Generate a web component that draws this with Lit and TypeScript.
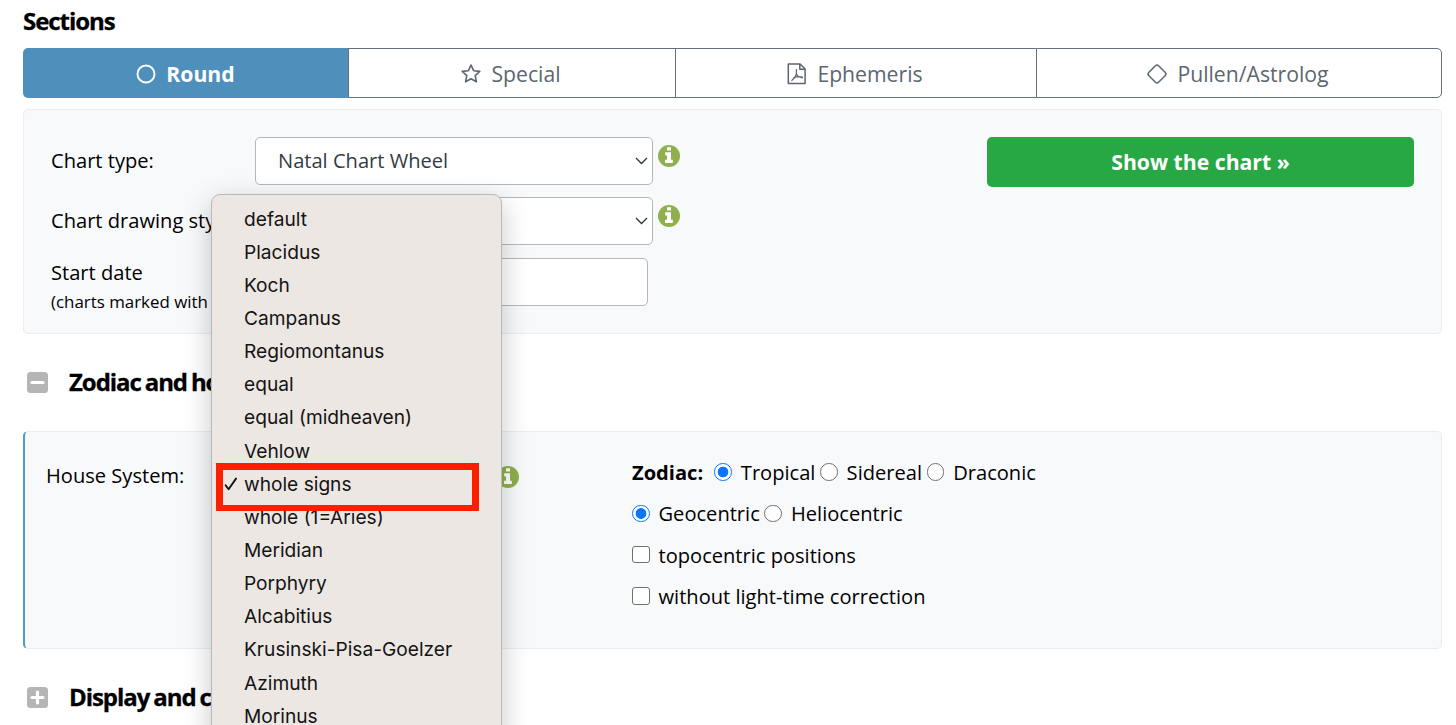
import { LitElement, html, css, svg } from 'lit';
import { customElement, property } from 'lit/decorators.js';

const HOUSE_SYSTEMS = [
  'default',
  'Placidus',
  'Koch',
  'Campanus',
  'Regiomontanus',
  'equal',
  'equal (midheaven)',
  'Vehlow',
  'whole signs',
  'whole (1=Aries)',
  'Meridian',
  'Porphyry',
  'Alcabitius',
  'Krusinski-Pisa-Goelzer',
  'Azimuth',
  'Morinus',
];

const TAB_ICONS = {
  round: svg`<circle cx="11" cy="11" r="8.5" stroke-width="1.9" />`,
  special: svg`<path d="M11 2l2.6 5.7 6.2.7-4.6 4.2 1.2 6.2-5.4-3.1-5.4 3.1 1.2-6.2-4.6-4.2 6.2-.7z" stroke-width="1.6" stroke-linejoin="round" />`,
  ephemeris: svg`
    <path d="M2.3 1h11.8l5 5v14.6H2.3zM13.8 1.2v5.1h5.2" stroke-width="1.5" stroke-linejoin="round" />
    <path d="M10.4 6.6v4.2c-.6 2.4-2.2 4.8-4.6 6.6M10.4 10.8c.8 2 2.8 3.6 6 4M7.8 14.6c2.4-1 5.4-1.3 8.6-.6" stroke-width="1.2" stroke-linecap="round" />
  `,
  pullen: svg`<rect x="4" y="4" width="14" height="14" rx="2.6" transform="rotate(45 11 11)" stroke-width="1.5" />`,
};

@customElement('info-icon')
export class InfoIcon extends LitElement {
  static styles = css`
    :host {
      display: block;
      width: 22px;
      height: 22px;
    }

    svg {
      display: block;
    }
  `;

  render() {
    return html`
      <svg width="22" height="22" viewBox="0 0 22 22">
        <circle cx="11" cy="11" r="11" fill="#8fb04c" />
        <path
          d="M9 2.3h4v3.2H9zM7.2 7.2h5.8v7.6h1.8v3.3H7v-3.3h2v-4.4H7.2z"
          fill="#fff"
        />
      </svg>
    `;
  }
}

@customElement('form-option')
export class FormOption extends LitElement {
  @property() type = 'radio';
  @property() name = '';
  @property({ type: Boolean }) checked = false;

  static styles = css`
    :host {
      display: block;
    }

    label {
      display: flex;
      align-items: center;
      gap: 9px;
      white-space: nowrap;
    }

    input {
      appearance: none;
      box-sizing: border-box;
      flex: none;
      width: 17.5px;
      height: 17.5px;
      margin: 0 0 2px;
      border: 1px solid #6f6f6f;
      border-radius: 3px;
      background: #fff;
    }

    input[type='radio'] {
      border-radius: 50%;
    }

    input[type='radio']:checked {
      border-color: #0a75ff;
      background: radial-gradient(circle, #0a75ff 5px, #fff 5.7px);
    }
  `;

  render() {
    return html`
      <label>
        <input type=${this.type} name=${this.name} .checked=${this.checked} />
        <slot></slot>
      </label>
    `;
  }
}

@customElement('app-root')
export class AppRoot extends LitElement {
  @property() selected = 'whole signs';

  static styles = css`
    :host {
      display: block;
      position: relative;
      box-sizing: border-box;
      height: 725px;
      overflow: hidden;
      padding: 0 14px 0 23px;
      background: #fff;
      color: #000;
      font-family: 'Open Sans', sans-serif;
      font-size: 20.1px;
      line-height: 30px;
    }

    * {
      box-sizing: border-box;
    }

    h2 {
      margin: 0;
      font-size: 24px;
      font-weight: 700;
      letter-spacing: -1.05px;
      word-spacing: -1.3px;
      white-space: nowrap;
      -webkit-text-stroke: 0.3px #000;
    }

    .title {
      padding-top: 6px;
      height: 48px;
    }

    .tabs {
      display: grid;
      grid-template-columns: 325px 327px 361px 1fr;
      height: 50px;
      color: #5c6670;
      font-size: 21.2px;
    }

    .tab {
      display: flex;
      align-items: center;
      justify-content: center;
      gap: 9px;
      padding: 1px 3px 0 0;
      border: 1px solid #66707a;
      border-right: none;
    }

    .tab:first-child {
      padding-right: 1px;
      border: none;
      border-radius: 5px 0 0 5px;
      background: #4e8fbc;
      color: #fff;
      font-weight: 700;
    }

    .tab:last-child {
      border-right: 1px solid #66707a;
      border-radius: 0 5px 5px 0;
    }

    .tab svg {
      fill: none;
      stroke: currentColor;
    }

    .panel {
      display: flex;
      border: 1px solid #ebecee;
      border-radius: 5px;
      background: #f8f9fb;
    }

    .chart-panel {
      justify-content: space-between;
      height: 225px;
      margin-top: 11px;
      padding: 27px 27px 0;
    }

    .fields {
      display: grid;
      grid-template-columns: 204px 398px 22px;
      grid-auto-rows: 48px;
      row-gap: 12.4px;
      column-gap: 0;
      white-space: nowrap;
    }

    .label {
      padding-top: 9px;
    }

    .label.double {
      padding-top: 0;
    }

    .label small {
      display: block;
      font-size: 16.9px;
      line-height: 28px;
    }

    .select,
    .input {
      border: 1px solid #b6b7b9;
      border-radius: 5px;
      background: #fff;
    }

    .select {
      display: flex;
      align-items: center;
      justify-content: space-between;
      padding: 0 4px 0 22px;
      color: #343c45;
    }

    .input {
      width: 393px;
    }

    .select svg {
      margin-left: auto;
      fill: none;
      stroke: #2b333b;
      stroke-width: 1.3;
    }

    .fields info-icon {
      margin: 8px 0 0 5px;
    }

    .submit {
      width: 427px;
      height: 50px;
      padding: 0 0 1px;
      border: none;
      border-radius: 5px;
      background: #28a745;
      color: #fff;
      font: inherit;
      font-size: 21.2px;
      font-weight: 700;
    }

    .section-head {
      display: flex;
      align-items: center;
      gap: 21px;
      height: 97px;
      padding-left: 4px;
    }

    .section-head h2 {
      padding-bottom: 2px;
    }

    .section-head svg {
      display: block;
    }

    .house-panel {
      height: 218px;
      padding: 29px 22px 0 21px;
      border-left: 2px solid #4f9ac6;
    }

    .house-field {
      display: flex;
      justify-content: space-between;
      width: 473px;
      margin-right: 113px;
    }

    .house-field info-icon {
      margin-top: 5px;
    }

    .options {
      display: grid;
      grid-auto-rows: 30px;
      row-gap: 11.3px;
      margin-top: -3px;
    }

    .row {
      display: flex;
      gap: 4.7px;
    }

    .row strong {
      margin-right: 6.5px;
    }

    .menu {
      position: absolute;
      top: 194px;
      left: 211px;
      width: 291px;
      height: 560px;
      padding-top: 7px;
      border: 1px solid #b9b9ba;
      border-radius: 9px;
      background: #ece7e3;
      box-shadow: 0 8px 28px rgba(0, 0, 0, 0.22);
      color: #141414;
      font-family: Inter, sans-serif;
      font-size: 19.15px;
    }

    .item {
      display: flex;
      align-items: center;
      height: 33.15px;
      padding-left: 12px;
      white-space: nowrap;
    }

    .mark {
      display: flex;
      width: 20px;
    }

    .highlight {
      position: absolute;
      top: 463px;
      left: 216px;
      width: 263px;
      height: 48px;
      border: 7px solid #ff1e00;
      border-bottom-width: 6px;
    }
  `;

  private renderTab(icon: keyof typeof TAB_ICONS, label: string) {
    return html`
      <div class="tab" role="tab">
        <svg width="22" height="22" viewBox="0 0 22 22">${TAB_ICONS[icon]}</svg>
        <span>${label}</span>
      </div>
    `;
  }

  private renderSelect(value: string) {
    return html`
      <div class="select">
        <span>${value}</span>
        <svg width="13" height="8" viewBox="0 0 13 8">
          <path d="M1 1l5.5 5.5L12 1" />
        </svg>
      </div>
    `;
  }

  private renderSectionHead(label: string, open: boolean) {
    return html`
      <div class="section-head">
        <svg width="21" height="21" viewBox="0 0 21 21">
          <rect width="21" height="21" rx="3.5" fill="#b5b5b5" />
          <path
            d=${open ? 'M5 10.5h11' : 'M5 10.5h11M10.5 5v11'}
            stroke="#fff"
            stroke-width="3.2"
            stroke-linecap="round"
          />
        </svg>
        <h2>${label}</h2>
      </div>
    `;
  }

  private renderMenu() {
    return html`
      <div class="menu" role="listbox">
        ${HOUSE_SYSTEMS.map(
          (name) => html`
            <div class="item" role="option">
              <span class="mark">
                ${name === this.selected
                  ? html`
                      <svg width="14" height="14" viewBox="0 0 14 14">
                        <path
                          d="M1.6 8.2l3 4L12 1.6"
                          fill="none"
                          stroke="#141414"
                          stroke-width="1.9"
                          stroke-linecap="round"
                          stroke-linejoin="round"
                        />
                      </svg>
                    `
                  : null}
              </span>
              ${name}
            </div>
          `,
        )}
      </div>
      <div class="highlight"></div>
    `;
  }

  render() {
    return html`
      <h2 class="title">Sections</h2>

      <div class="tabs" role="tablist">
        ${this.renderTab('round', 'Round')}
        ${this.renderTab('special', 'Special')}
        ${this.renderTab('ephemeris', 'Ephemeris')}
        ${this.renderTab('pullen', 'Pullen/Astrolog')}
      </div>

      <div class="panel chart-panel">
        <div class="fields">
          <span class="label">Chart type:</span>
          ${this.renderSelect('Natal Chart Wheel')}
          <info-icon></info-icon>
          <span class="label">Chart drawing style:</span>
          ${this.renderSelect('')}
          <info-icon></info-icon>
          <span class="label double">
            Start date
            <small>(charts marked with *)</small>
          </span>
          <div class="input"></div>
        </div>
        <button class="submit">Show the chart »</button>
      </div>

      ${this.renderSectionHead('Zodiac and houses', true)}

      <div class="panel house-panel">
        <div class="house-field">
          <span>House System:</span>
          <info-icon></info-icon>
        </div>
        <div class="options">
          <div class="row">
            <strong>Zodiac:</strong>
            <form-option name="zodiac" checked>Tropical</form-option>
            <form-option name="zodiac">Sidereal</form-option>
            <form-option name="zodiac">Draconic</form-option>
          </div>
          <div class="row">
            <form-option name="center" checked>Geocentric</form-option>
            <form-option name="center">Heliocentric</form-option>
          </div>
          <form-option type="checkbox">topocentric positions</form-option>
          <form-option type="checkbox">without light-time correction</form-option>
        </div>
      </div>

      ${this.renderSectionHead('Display and calculation', false)}
      ${this.renderMenu()}
    `;
  }
}
